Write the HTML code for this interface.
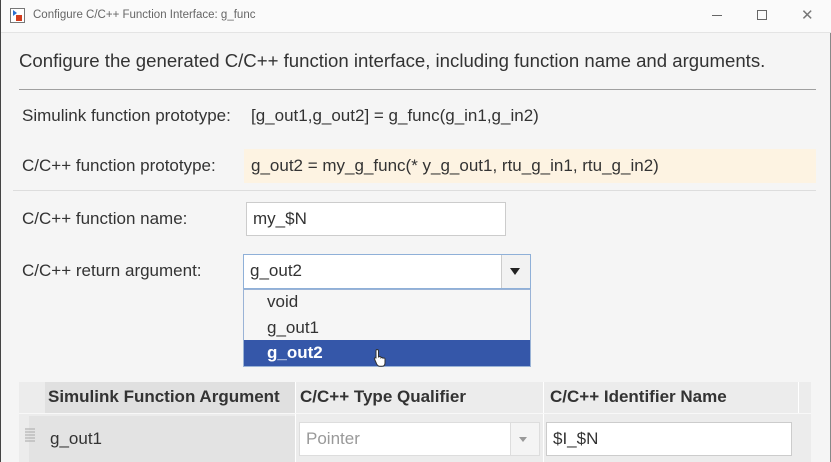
<!DOCTYPE html>
<html><head><style>
*{margin:0;padding:0;box-sizing:border-box}
body{width:831px;height:462px;overflow:hidden;background:#f5f5f5;font-family:"Liberation Sans",Arial,sans-serif;color:#333;position:relative;border-left:1px solid #444;border-right:1px solid #888}
.a{position:absolute;white-space:nowrap}
.t{font-size:17px;line-height:20px}
</style></head><body>
<div class="a" style="left:0;top:0;width:831px;height:33px;background:#fafafa;border-bottom:1px solid #e4e4e4"></div>
<svg class="a" style="left:9px;top:8px" width="15" height="15" viewBox="0 0 15 15"><rect x="0.5" y="0.5" width="14" height="14" fill="#fff" stroke="#777"/><path d="M3 2v6l4-3z" fill="#2a6fd0"/><rect x="6" y="7" width="6" height="6" fill="#d23c1e"/></svg>
<div class="a" style="left:32px;top:9px;font-size:11.5px;color:#666">Configure C/C++ Function Interface: g_func</div>
<div class="a" style="left:711px;top:15px;width:10px;height:1px;background:#666"></div>
<div class="a" style="left:756px;top:10px;width:10px;height:10px;border:1px solid #666"></div>
<div class="a" style="left:800px;top:6px;font-size:15px;color:#777">✕</div>
<div class="a" style="left:18px;top:50px;font-size:18.6px;color:#333">Configure the generated C/C++ function interface, including function name and arguments.</div>
<div class="a" style="left:18px;top:89px;width:797px;height:1px;background:#a0a0a0"></div>
<div class="a t" style="left:21px;top:106px">Simulink function prototype:</div>
<div class="a t" style="left:250px;top:106px">[g_out1,g_out2] = g_func(g_in1,g_in2)</div>
<div class="a" style="left:243px;top:149px;width:572px;height:34px;background:#fdf3e2"></div>
<div class="a t" style="left:21px;top:156px">C/C++ function prototype:</div>
<div class="a t" style="left:250px;top:156px">g_out2 = my_g_func(* y_g_out1, rtu_g_in1, rtu_g_in2)</div>
<div class="a" style="left:12px;top:190px;width:803px;height:1px;background:#ddd"></div>
<div class="a t" style="left:21px;top:209px">C/C++ function name:</div>
<div class="a t" style="left:245px;top:202px;width:260px;height:34px;background:#fff;border:1px solid #ccc;padding:6px 0 0 6px">my_$N</div>
<div class="a t" style="left:21px;top:261px">C/C++ return argument:</div>
<div class="a" style="left:242px;top:254px;width:288px;height:35px;background:#fff;border:1px solid #8fb0d8"></div>
<div class="a" style="left:500px;top:255px;width:29px;height:33px;background:#f2f2f2;border-left:1px solid #ccc"></div>
<div class="a" style="left:509px;top:268px;border-left:5px solid transparent;border-right:5px solid transparent;border-top:7px solid #222"></div>
<div class="a t" style="left:249px;top:261px">g_out2</div>
<div class="a" style="left:242px;top:289px;width:288px;height:78px;background:#f6f6f6;border:1px solid #9ab3d6"></div>
<div class="a t" style="left:266px;top:292px">void</div>
<div class="a t" style="left:266px;top:318px">g_out1</div>
<div class="a" style="left:243px;top:340px;width:286px;height:26px;background:#3557a9"></div>
<div class="a t" style="left:266px;top:343px;color:#fff;font-weight:bold">g_out2</div>
<svg class="a" style="left:372px;top:348px" width="16" height="20" viewBox="0 0 16 20"><path d="M4 1.5c1 0 1.5.6 1.5 1.5v6l1-.5c1 0 1.5.6 1.5 1v.3c.5-.5 1.8-.4 2 .4.5-.4 1.8-.3 2 .6v4c0 2-1 3.5-3 3.5H7c-1.5 0-2.5-1-3.3-2.2L1.5 11c-.4-.8.5-1.7 1.3-1L3 10V3c0-1 .4-1.5 1-1.5z" fill="#fff" stroke="#333" stroke-width="1"/></svg>
<div class="a" style="left:18px;top:382px;width:792px;height:80px;background:#ececec"></div>
<div class="a" style="left:44px;top:382px;width:250px;height:31px;background:#e0e0e0"></div>
<div class="a" style="left:294px;top:382px;width:1px;height:80px;background:#fff"></div>
<div class="a" style="left:542px;top:382px;width:1px;height:80px;background:#fff"></div>
<div class="a" style="left:797px;top:382px;width:1px;height:31px;background:#fff"></div>
<div class="a" style="left:18px;top:413px;width:792px;height:1px;background:#f8f8f8"></div>
<div class="a t" style="left:47px;top:387px;font-weight:bold;color:#333">Simulink Function Argument</div>
<div class="a t" style="left:299px;top:387px;font-weight:bold;color:#333">C/C++ Type Qualifier</div>
<div class="a t" style="left:549px;top:387px;font-weight:bold;color:#333">C/C++ Identifier Name</div>
<div class="a" style="left:28px;top:416px;width:266px;height:46px;background:#e3e3e3"></div>
<div class="a" style="left:24px;top:428px;width:10px;height:14px;background:repeating-linear-gradient(0deg,#bbb 0 2px,transparent 2px 3px),#e3e3e3;opacity:.7"></div>
<div class="a t" style="left:49px;top:429px">g_out1</div>
<div class="a" style="left:298px;top:422px;width:241px;height:34px;background:#fff;border:1px solid #ddd"></div>
<div class="a" style="left:509px;top:423px;width:29px;height:32px;background:#f4f4f4;border-left:1px solid #ddd"></div>
<div class="a" style="left:518px;top:437px;border-left:4px solid transparent;border-right:4px solid transparent;border-top:5px solid #999"></div>
<div class="a t" style="left:305px;top:429px;color:#999">Pointer</div>
<div class="a t" style="left:545px;top:422px;width:246px;height:34px;background:#fff;border:1px solid #ccc;padding:6px 0 0 6px">$I_$N</div>
</body></html>
